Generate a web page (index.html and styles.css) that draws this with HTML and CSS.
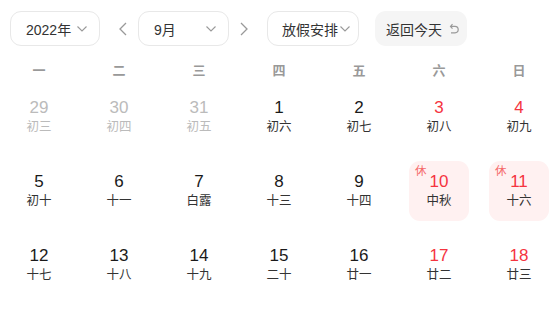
FILE: index.html
```html
<!DOCTYPE html>
<html lang="zh-CN">
<head>
<meta charset="utf-8">
<link rel="stylesheet" href="styles.css">
</head>
<body>
<div class="cal">
  <div class="toolbar">
    <div class="select year"><span>2022年</span><svg class="chev" width="10" height="6" viewBox="0 0 10 6"><polyline points="0.5,0.5 5,5 9.5,0.5"/></svg></div>
    <div class="arrow"><svg width="8" height="14" viewBox="0 0 8 14"><polyline points="7,1 1,7 7,13"/></svg></div>
    <div class="select month"><span>9月</span><svg class="chev" width="10" height="6" viewBox="0 0 10 6"><polyline points="0.5,0.5 5,5 9.5,0.5"/></svg></div>
    <div class="arrow"><svg width="8" height="14" viewBox="0 0 8 14"><polyline points="1,1 7,7 1,13"/></svg></div>
    <div class="select holiday"><span>放假安排</span><svg class="chev" width="10" height="6" viewBox="0 0 10 6"><polyline points="0.5,0.5 5,5 9.5,0.5"/></svg></div>
    <div class="today"><span>返回今天</span><svg class="undo" width="10" height="12" viewBox="0 0 10 12"><path d="M3.5 1.2 L1.5 3.4 L3.5 5.6 M1.6 3.4 H6 A3.2 3.2 0 0 1 6 9.8 H2"/></svg></div>
  </div>
  <div class="weekdays">
    <div>一</div><div>二</div><div>三</div><div>四</div><div>五</div><div>六</div><div>日</div>
  </div>
  <div class="grid">
    <div class="day other"><div class="num">29</div><div class="lunar">初三</div></div>
    <div class="day other"><div class="num">30</div><div class="lunar">初四</div></div>
    <div class="day other"><div class="num">31</div><div class="lunar">初五</div></div>
    <div class="day"><div class="num">1</div><div class="lunar">初六</div></div>
    <div class="day"><div class="num">2</div><div class="lunar">初七</div></div>
    <div class="day weekend"><div class="num">3</div><div class="lunar">初八</div></div>
    <div class="day weekend"><div class="num">4</div><div class="lunar">初九</div></div>

    <div class="day"><div class="num">5</div><div class="lunar">初十</div></div>
    <div class="day"><div class="num">6</div><div class="lunar">十一</div></div>
    <div class="day"><div class="num">7</div><div class="lunar">白露</div></div>
    <div class="day"><div class="num">8</div><div class="lunar">十三</div></div>
    <div class="day"><div class="num">9</div><div class="lunar">十四</div></div>
    <div class="day weekend rest"><span class="badge">休</span><div class="num">10</div><div class="lunar">中秋</div></div>
    <div class="day weekend rest"><span class="badge">休</span><div class="num">11</div><div class="lunar">十六</div></div>

    <div class="day"><div class="num">12</div><div class="lunar">十七</div></div>
    <div class="day"><div class="num">13</div><div class="lunar">十八</div></div>
    <div class="day"><div class="num">14</div><div class="lunar">十九</div></div>
    <div class="day"><div class="num">15</div><div class="lunar">二十</div></div>
    <div class="day"><div class="num">16</div><div class="lunar">廿一</div></div>
    <div class="day weekend"><div class="num">17</div><div class="lunar">廿二</div></div>
    <div class="day weekend"><div class="num">18</div><div class="lunar">廿三</div></div>
  </div>
</div>
</body>
</html>
```
FILE: styles.css
```css
html, body {
  margin: 0;
  padding: 0;
  background: #fff;
  overflow: hidden;
}
body {
  width: 557px;
  height: 319px;
  font-family: "Liberation Sans", "Noto Sans CJK SC", sans-serif;
  color: #222;
}
.cal {
  width: 557px;
}
.toolbar {
  display: flex;
  align-items: center;
  padding: 11px 0 0 10px;
  height: 35px;
}
.select {
  box-sizing: border-box;
  height: 35px;
  border: 1px solid #e8e8e8;
  border-radius: 11px;
  display: flex;
  align-items: center;
  justify-content: space-between;
  padding: 0 12px 0 15px;
  font-size: 14px;
  color: #333;
  white-space: nowrap;
  flex-shrink: 0;
}
.year { width: 90px; }
.month { width: 91px; }
.holiday {
  width: 92px;
  justify-content: flex-start;
  padding: 0 0 0 14px;
}
.holiday .chev { margin-left: 2px; flex-shrink: 0; }
.chev polyline {
  fill: none;
  stroke: #999;
  stroke-width: 1.1;
}
.arrow {
  width: 20px;
  height: 35px;
  display: flex;
  align-items: center;
  justify-content: center;
  flex-shrink: 0;
}
.arrow polyline {
  fill: none;
  stroke: #999;
  stroke-width: 1.3;
}
.year + .arrow { margin: 0 5px 0 13px; }
.month + .arrow { margin: 0 13px 0 5px; }
.today {
  box-sizing: border-box;
  margin-left: 16px;
  width: 92px;
  height: 35px;
  border-radius: 11px;
  background: #f5f5f5;
  display: flex;
  align-items: center;
  padding-left: 11px;
  font-size: 14px;
  color: #333;
  white-space: nowrap;
  flex-shrink: 0;
}
.undo {
  margin-left: 7px;
}
.undo path {
  fill: none;
  stroke: #999;
  stroke-width: 1.2;
}
.weekdays, .grid {
  display: grid;
  grid-template-columns: repeat(7, 80px);
  margin-left: -1px;
}
.weekdays {
  margin-top: 8px;
  height: 30px;
  align-items: center;
}
.weekdays div {
  text-align: center;
  font-size: 13px;
  color: #999;
  font-weight: 600;
}
.grid {
  margin-top: 3px;
  row-gap: 14px;
}
.day {
  position: relative;
  box-sizing: border-box;
  width: 60px;
  height: 60px;
  justify-self: center;
  border-radius: 11px;
  padding-top: 10px;
  text-align: center;
}
.num {
  font-size: 17px;
  line-height: 21px;
  color: #1a1a1a;
}
.lunar {
  font-size: 12.5px;
  line-height: 19px;
  color: #333;
}
.other .num, .other .lunar {
  color: #bbb;
}
.weekend .num {
  color: #f5343f;
}
.rest {
  background: #fff1f1;
}
.badge {
  position: absolute;
  left: 6px;
  top: 4px;
  font-size: 11.5px;
  line-height: 12px;
  color: #f56a6a;
}
```
